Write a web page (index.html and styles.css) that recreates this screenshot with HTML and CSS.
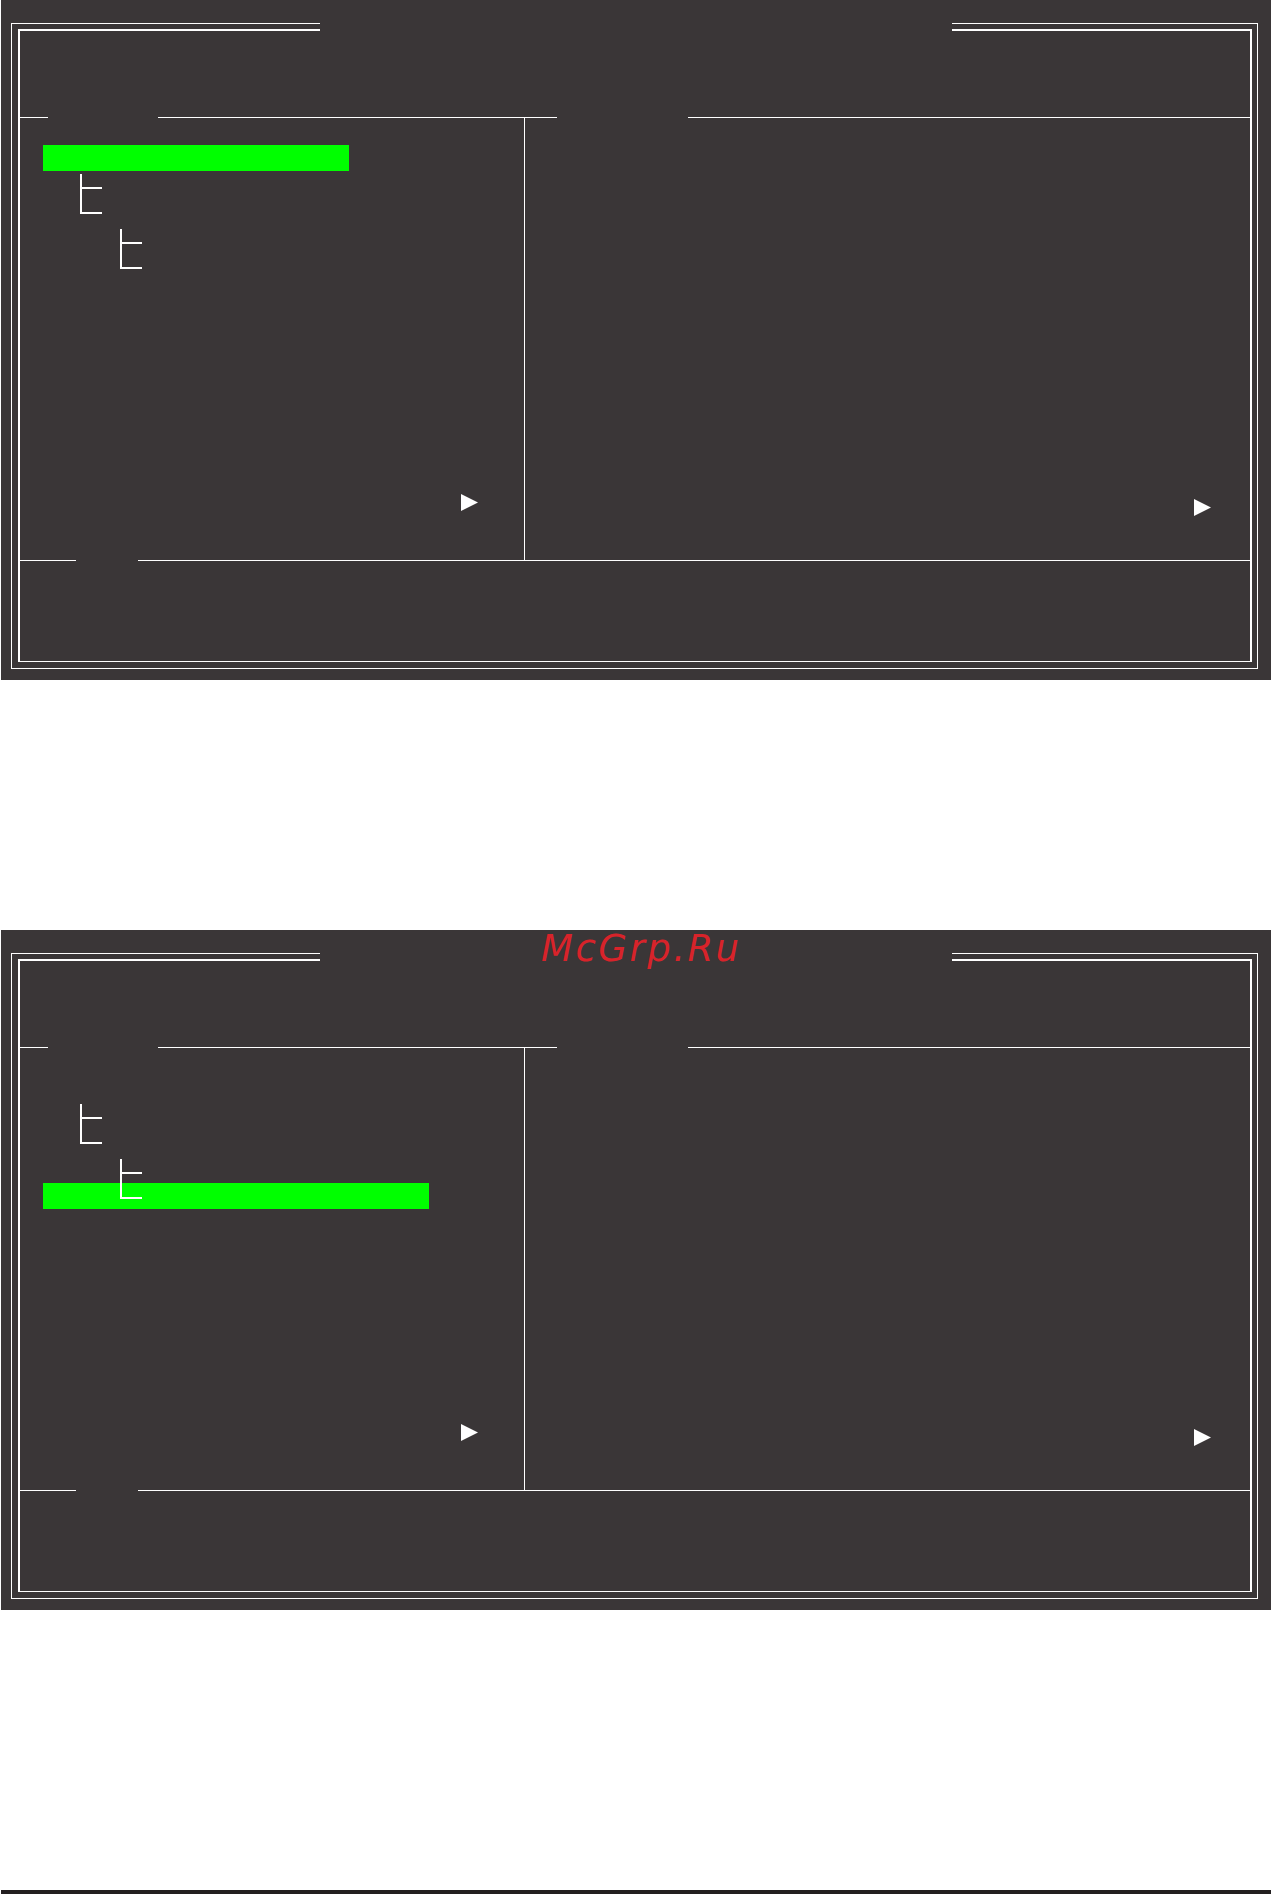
FILE: index.html
```html
<!DOCTYPE html>
<html lang="ru">
<head>
<meta charset="utf-8">
<title>BIOS Setup</title>
<link rel="stylesheet" href="styles.css">
</head>
<body>
<div class="page">

  <section class="bios">
    <div class="frame-outer">
      <div class="cap cap-outer"><span class="cap-l"></span><span class="cap-gap"></span><span class="cap-r"></span></div>
      <div class="outer-body">
        <div class="cap cap-inner"><span class="cap-l"></span><span class="cap-gap"></span><span class="cap-r"></span></div>
        <div class="inner-body">
          <div class="header"></div>
          <div class="rule rule-top"><span class="seg s1"></span><span class="gap g1"></span><span class="seg s2"></span><span class="gap g2"></span><span class="seg s3"></span></div>
          <div class="main">
            <div class="col-left">
              <ul class="menu">
                <li class="item hl hl-a"></li>
                <li class="item lvl1 tee first-child-row"><span class="conn"><span class="conn-top"></span><span class="conn-rest"></span></span></li>
                <li class="item lvl1 elbow"><span class="conn"><span class="conn-top"></span></span></li>
                <li class="item lvl2 tee nested-start"><span class="conn"><span class="conn-top"></span><span class="conn-rest"></span></span></li>
                <li class="item lvl2 elbow"><span class="conn"><span class="conn-top"></span></span></li>
              </ul>
              <svg class="more more-left" viewBox="0 0 17 17" aria-hidden="true"><polygon points="0,0 17,8.5 0,17" fill="#ffffff"/></svg>
            </div>
            <div class="col-right">
              <svg class="more more-right" viewBox="0 0 17 17" aria-hidden="true"><polygon points="0,0 17,8.5 0,17" fill="#ffffff"/></svg>
            </div>
          </div>
          <div class="rule rule-bottom"><span class="seg s1"></span><span class="gap g1"></span><span class="seg s3"></span></div>
          <div class="footer"></div>
        </div>
      </div>
    </div>
  </section>

  <section class="bios bios-second">
    <div class="watermark">McGrp.Ru</div>
    <div class="frame-outer">
      <div class="cap cap-outer"><span class="cap-l"></span><span class="cap-gap"></span><span class="cap-r"></span></div>
      <div class="outer-body">
        <div class="cap cap-inner"><span class="cap-l"></span><span class="cap-gap"></span><span class="cap-r"></span></div>
        <div class="inner-body">
          <div class="header"></div>
          <div class="rule rule-top"><span class="seg s1"></span><span class="gap g1"></span><span class="seg s2"></span><span class="gap g2"></span><span class="seg s3"></span></div>
          <div class="main">
            <div class="col-left">
              <ul class="menu">
                <li class="item"></li>
                <li class="item lvl1 tee first-child-row"><span class="conn"><span class="conn-top"></span><span class="conn-rest"></span></span></li>
                <li class="item lvl1 elbow"><span class="conn"><span class="conn-top"></span></span></li>
                <li class="item lvl2 tee nested-start"><span class="conn"><span class="conn-top"></span><span class="conn-rest"></span></span></li>
                <li class="item lvl2 elbow hl hl-b"><span class="conn"><span class="conn-top"></span></span></li>
              </ul>
              <svg class="more more-left" viewBox="0 0 17 17" aria-hidden="true"><polygon points="0,0 17,8.5 0,17" fill="#ffffff"/></svg>
            </div>
            <div class="col-right">
              <svg class="more more-right" viewBox="0 0 17 17" aria-hidden="true"><polygon points="0,0 17,8.5 0,17" fill="#ffffff"/></svg>
            </div>
          </div>
          <div class="rule rule-bottom"><span class="seg s1"></span><span class="gap g1"></span><span class="seg s3"></span></div>
          <div class="footer"></div>
        </div>
      </div>
    </div>
  </section>

  <div class="endbar"></div>
</div>
</body>
</html>
```

FILE: styles.css
```css
html, body {
  margin: 0;
  padding: 0;
  background: #ffffff;
  font-family: "DejaVu Sans", "Liberation Sans", sans-serif;
}

.page {
  width: 1271px;
}

.bios {
  position: relative;
  box-sizing: border-box;
  width: 1270px;
  height: 680px;
  margin-left: 1px;
  padding: 23px 13px 11px 10px;
  background: #3a3637;
}

.bios + .bios {
  margin-top: 250px;
}

.frame-outer {
  display: flex;
  flex-direction: column;
  height: 100%;
}

/* top edges with a title gap */
.cap {
  display: flex;
  flex: none;
}
.cap-gap {
  flex: none;
  width: 632px;
}
.cap-r {
  flex: 1;
}
.cap-outer .cap-l {
  flex: none;
  width: 309px;
  border-top: 1px solid #ffffff;
}
.cap-outer .cap-r {
  border-top: 1px solid #ffffff;
}
.cap-inner .cap-l {
  flex: none;
  width: 302px;
  border-top: 2px solid #ffffff;
}
.cap-inner .cap-r {
  border-top: 2px solid #ffffff;
}

.outer-body {
  flex: 1;
  display: flex;
  flex-direction: column;
  border: 1px solid #ffffff;
  border-top: 0;
  padding: 5px 5px 6px 6px;
}

.inner-body {
  flex: 1;
  display: flex;
  flex-direction: column;
  border: 2px solid #ffffff;
  border-top: 0;
  border-bottom-width: 1px;
}

.header {
  height: 86px;
  flex: none;
}

.rule {
  display: flex;
  height: 1px;
  flex: none;
}
.rule .seg {
  background: #ffffff;
}
.rule .gap {
  flex: none;
}
.rule-top .s1 { width: 28px; }
.rule-top .g1 { width: 110px; }
.rule-top .s2 { width: 399px; }
.rule-top .g2 { width: 131px; }
.rule .s3 { flex: 1; }
.rule-bottom .s1 { width: 56px; }
.rule-bottom .g1 { width: 62px; }

.main {
  height: 442px;
  flex: none;
  display: flex;
}

.col-left {
  width: 504px;
  flex: none;
  border-right: 1px solid #ffffff;
  display: flex;
  flex-direction: column;
}

.col-right {
  flex: 1;
  display: flex;
  flex-direction: column;
}

.footer {
  flex: 1;
}

/* menu tree */
.menu {
  list-style: none;
  margin: 27px 0 0 23px;
  padding: 0;
}

.item {
  box-sizing: border-box;
  display: flex;
  height: 25px;
}

.item.first-child-row {
  margin-top: 3px;
}
.item.nested-start {
  margin-top: 5px;
}

.item.hl {
  background: #00ff00;
  box-shadow: 0 1px 0 #00ff00;
}
.hl-a { width: 306px; }
.hl-b { width: 386px; }

.lvl1 { padding-left: 37px; }
.lvl2 { padding-left: 77px; }

.conn {
  width: 22px;
  flex: none;
  display: flex;
  flex-direction: column;
}
.conn-top {
  flex: none;
  border-left: 2px solid #ffffff;
  border-bottom: 2px solid #ffffff;
}
.tee .conn {
  margin-top: 1px;
}
.tee .conn-top {
  height: 13px;
}
.tee .conn-rest {
  flex: 1;
  border-left: 2px solid #ffffff;
}
.elbow .conn-top {
  height: 14px;
}

/* "more" arrows */
.more {
  display: block;
  width: 17px;
  height: 17px;
  margin-top: auto;
  align-self: flex-end;
}
.more-left {
  margin-right: 46px;
  margin-bottom: 49px;
}
.more-right {
  margin-right: 39px;
  margin-bottom: 44px;
}

/* watermark lying over the title gap */
.watermark {
  position: absolute;
  left: 540px;
  top: 0;
  font-family: "DejaVu Sans", "Verdana", sans-serif;
  font-style: italic;
  font-size: 37px;
  line-height: 1;
  letter-spacing: 2.5px;
  color: #d8232a;
  white-space: nowrap;
}

.endbar {
  margin-top: 280px;
  margin-left: 1px;
  height: 4px;
  background: #231f20;
}
```
